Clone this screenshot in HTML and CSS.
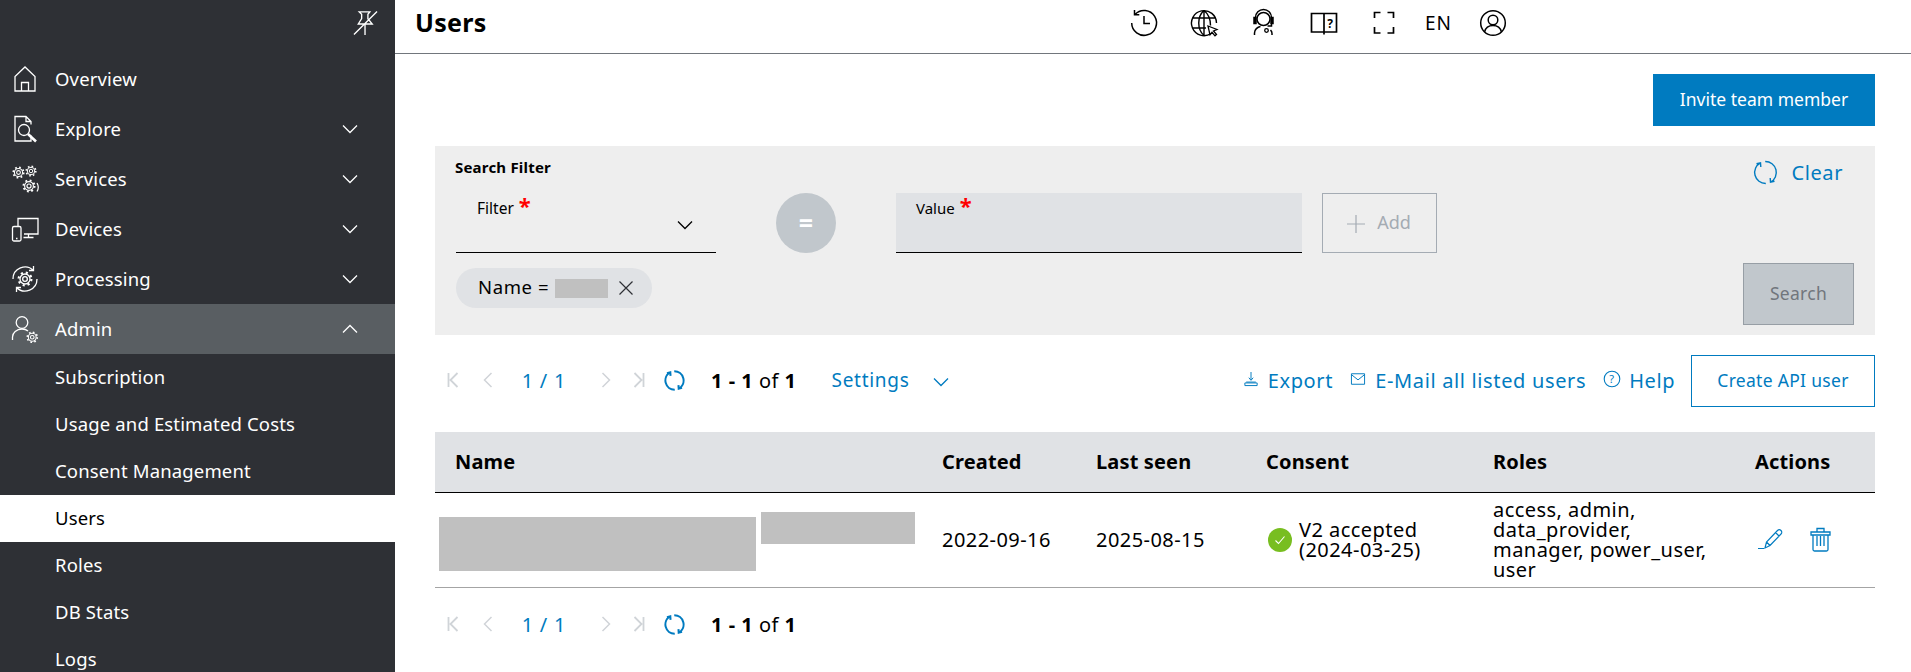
FILE: index.html
```html
<!DOCTYPE html>
<html lang="en">
<head>
<meta charset="utf-8">
<title>Users</title>
<link rel="stylesheet" href="styles.css">
</head>
<body>
<svg class="defs" width="0" height="0" aria-hidden="true">
  <defs>
    <symbol id="gear" viewBox="0 0 24 24">
      <circle cx="12" cy="12" r="7.500" fill="none" stroke="currentColor" stroke-width="2"/>
      <circle cx="12" cy="12" r="9.600" fill="none" stroke="currentColor" stroke-width="3.200" stroke-dasharray="3.200 4.340"/>
      <circle cx="12" cy="12" r="3.500" fill="none" stroke="currentColor" stroke-width="2"/>
    </symbol>
    <symbol id="chev-down" viewBox="0 0 16 10">
      <path d="M1 1.500 8 8.500l7-7" fill="none" stroke="currentColor" stroke-width="1.300"/>
    </symbol>
    <symbol id="chev-up" viewBox="0 0 16 10">
      <path d="M1 8.500 8 1.500l7 7" fill="none" stroke="currentColor" stroke-width="1.300"/>
    </symbol>
    <symbol id="refresh" viewBox="0 0 25 25">
      <path d="M7.500 2.800A11 11 0 0 0 12.800 23.500M12.200 1.500A11 11 0 0 1 17.500 22.200M3.500 3.800 7.500 2.800 7.800 7M21.500 21.200 17.500 22.200 17.200 18" fill="none" stroke="currentColor"/>
    </symbol>
    <symbol id="first" viewBox="0 0 12 16">
      <path d="M1.500 1v14M10.500 1 3.500 8l7 7" fill="none" stroke="currentColor" stroke-width="1.800"/>
    </symbol>
    <symbol id="prev" viewBox="0 0 10 16">
      <path d="M8.500 1 1.500 8l7 7" fill="none" stroke="currentColor" stroke-width="1.500"/>
    </symbol>
    <symbol id="next" viewBox="0 0 10 16">
      <path d="M1.500 1l7 7-7 7" fill="none" stroke="currentColor" stroke-width="1.500"/>
    </symbol>
    <symbol id="last" viewBox="0 0 12 16">
      <path d="M10.500 1v14M1.500 1l7 7-7 7" fill="none" stroke="currentColor" stroke-width="1.800"/>
    </symbol>
  </defs>
</svg>

<div class="app">
  <aside class="sidebar">
    <div class="pin-row">
      <svg class="pin" viewBox="0 0 26 26" aria-hidden="true"><path d="M6.500 1.500h11l-2 2.500v4.500l4.500 5.500H5.500L9 8.500V4zM12.500 14V25.500M1 25 25 1" fill="none" stroke="currentColor" stroke-width="1.400"/></svg>
    </div>
    <nav class="nav">
      <a class="nav-item">
        <span class="nav-icon"><svg viewBox="0 0 30 30"><path d="M5 27V12.500L15 3l10 9.500V27zM11.500 27V18.500h7V27" fill="none" stroke="currentColor" stroke-width="1.300"/></svg></span>
        <span class="nav-label">Overview</span>
      </a>
      <a class="nav-item">
        <span class="nav-icon"><svg viewBox="0 0 30 30"><path d="M21 21.500v5.500H5V2.500h11l5 5v3M16 2.500v5h5" fill="none" stroke="currentColor" stroke-width="1.300"/><circle cx="14" cy="16" r="5.500" fill="none" stroke="currentColor" stroke-width="1.300"/><path d="m18 20 8 7.500" fill="none" stroke="currentColor" stroke-width="2.600"/></svg></span>
        <span class="nav-label">Explore</span>
        <svg class="nav-chev"><use href="#chev-down"/></svg>
      </a>
      <a class="nav-item">
        <span class="nav-icon"><svg viewBox="0 0 30 30"><use href="#gear" x="2" y="2" width="13" height="13"/><use href="#gear" x="15" y="1" width="12" height="12"/><use href="#gear" x="12" y="15" width="14" height="14"/><path d="M27 19c1.500 2.500 1.500 6 0 8.500" fill="none" stroke="currentColor" stroke-width="1.200"/></svg></span>
        <span class="nav-label">Services</span>
        <svg class="nav-chev"><use href="#chev-down"/></svg>
      </a>
      <a class="nav-item">
        <span class="nav-icon"><svg viewBox="0 0 30 30"><path d="M8 12V4.500h20V20H14M18.500 20v3.500M13.500 23.500h10" fill="none" stroke="currentColor" stroke-width="1.300"/><rect x="2.500" y="12.500" width="8.500" height="14.500" rx="1.500" fill="none" stroke="currentColor" stroke-width="1.300"/><path d="M6 24.500h1.500" stroke="currentColor" stroke-width="1.300"/></svg></span>
        <span class="nav-label">Devices</span>
        <svg class="nav-chev"><use href="#chev-down"/></svg>
      </a>
      <a class="nav-item">
        <span class="nav-icon"><svg viewBox="0 0 30 30"><use href="#gear" x="7" y="7" width="16" height="16"/><path d="M3 15a12 12 0 0 1 20.500-8.500M27 15A12 12 0 0 1 6.500 23.500M23.500 2v4.500H19M6.500 28v-4.500H11" fill="none" stroke="currentColor" stroke-width="1.300"/></svg></span>
        <span class="nav-label">Processing</span>
        <svg class="nav-chev"><use href="#chev-down"/></svg>
      </a>
      <a class="nav-item is-open">
        <span class="nav-icon"><svg viewBox="0 0 30 30"><circle cx="12" cy="8.500" r="5.800" fill="none" stroke="currentColor" stroke-width="1.300"/><path d="M2.500 26v-3c0-4 4-8 9.500-8 2.500 0 4.500.7 6 2" fill="none" stroke="currentColor" stroke-width="1.300"/><use href="#gear" x="16" y="17" width="12.500" height="12.500"/></svg></span>
        <span class="nav-label">Admin</span>
        <svg class="nav-chev"><use href="#chev-up"/></svg>
      </a>
      <a class="nav-sub">Subscription</a>
      <a class="nav-sub">Usage and Estimated Costs</a>
      <a class="nav-sub">Consent Management</a>
      <a class="nav-sub is-active">Users</a>
      <a class="nav-sub">Roles</a>
      <a class="nav-sub">DB Stats</a>
      <a class="nav-sub">Logs</a>
    </nav>
  </aside>

  <div class="main">
    <header class="topbar">
      <h1 class="title">Users</h1>
      <div class="top-icons">
        <span class="top-icon"><svg viewBox="0 0 30 30"><path d="M6 6.500A12.400 12.400 0 1 1 2.700 15M5.500 2v4.800h4.800M15 8v7.500h6" fill="none" stroke="currentColor" stroke-width="1.500"/></svg></span>
        <span class="top-icon"><svg viewBox="0 0 30 30"><path d="M22 25.500A12.500 12.500 0 1 1 27.500 15M15 2.500c-7 6-7 19 0 25M15 2.500c5 4 6.500 10 6.500 15M15 2.500v25M3 10h24M3 20h14" fill="none" stroke="currentColor" stroke-width="1.400"/><path d="m19 18 9 3.500-3.500 1.500 3 3.500-1.500 1.300-3-3.500-2 2.500z" fill="#fff" stroke="currentColor" stroke-width="1.300"/></svg></span>
        <span class="top-icon"><svg viewBox="0 0 30 30"><circle cx="14.500" cy="11" r="6.500" fill="none" stroke="currentColor" stroke-width="1.500"/><path d="M6.500 15V9.500a8 8 0 0 1 16 0V15M5 9.500h2v6H5zM22 9.500h2v6h-2zM22.500 15v3h-4M5.500 27v-2c0-3.500 3-6 6-6.500M23 27v-1.500c0-1.500-.5-2.500-1.500-3.500" fill="none" stroke="currentColor" stroke-width="1.500"/><circle cx="17.500" cy="22.500" r="1.800" fill="none" stroke="currentColor" stroke-width="1.300"/></svg></span>
        <span class="top-icon"><svg viewBox="0 0 30 30"><path d="M2.500 5.500h25v18.500h-25zM15 5.500v21" fill="none" stroke="currentColor" stroke-width="1.700"/><text class="book-q" x="21" y="19.500" text-anchor="middle">?</text></svg></span>
        <span class="top-icon"><svg viewBox="0 0 30 30"><path d="M5.500 10V4.500h6M18.500 4.500h6V10M24.500 19v6h-6M11.500 25h-6v-6" fill="none" stroke="currentColor" stroke-width="1.700"/></svg></span>
        <span class="top-lang">EN</span>
        <span class="top-icon"><svg viewBox="0 0 30 30"><circle cx="15" cy="15" r="12.300" fill="none" stroke="currentColor" stroke-width="1.500"/><circle cx="15" cy="12" r="4.800" fill="none" stroke="currentColor" stroke-width="1.500"/><path d="M6.500 24c1-4 4.500-6.500 8.500-6.500s7.500 2.500 8.500 6.500" fill="none" stroke="currentColor" stroke-width="1.500"/></svg></span>
      </div>
    </header>

    <div class="content">
      <div class="action-row">
        <button class="btn-primary">Invite team member</button>
      </div>

      <section class="panel">
        <div class="panel-left">
          <div class="panel-title">Search Filter</div>
          <div class="filter-row">
            <div class="field field-select">
              <span class="field-label">Filter<span class="req">*</span></span>
              <svg class="field-chev"><use href="#chev-down"/></svg>
            </div>
            <div class="op">=</div>
            <div class="field field-value">
              <span class="field-label">Value<span class="req">*</span></span>
            </div>
            <button class="btn-add"><svg class="plus" viewBox="0 0 20 20"><path d="M10 1v18M1 10h18" stroke="currentColor" stroke-width="1.200"/></svg>Add</button>
          </div>
          <div class="chip">
            <span class="chip-name">Name =</span>
            <span class="chip-redact"></span>
            <svg class="chip-x" viewBox="0 0 16 16"><path d="M1.500 1.500l13 13M14.500 1.500l-13 13" stroke="currentColor" stroke-width="1.200"/></svg>
          </div>
        </div>
        <div class="panel-right">
          <a class="clear"><svg class="clear-icon"><use href="#refresh"/></svg>Clear</a>
          <button class="btn-search">Search</button>
        </div>
      </section>

      <div class="toolbar">
        <div class="pager">
          <svg class="pg pg-first"><use href="#first"/></svg>
          <svg class="pg pg-prev"><use href="#prev"/></svg>
          <span class="pg-num">1 / 1</span>
          <svg class="pg pg-next"><use href="#next"/></svg>
          <svg class="pg pg-last"><use href="#last"/></svg>
          <svg class="pg-refresh"><use href="#refresh"/></svg>
          <span class="pg-count"><b>1 - 1</b> of <b>1</b></span>
        </div>
        <a class="settings">Settings<svg class="settings-chev"><use href="#chev-down"/></svg></a>
        <div class="tools">
          <a class="tool"><svg class="tool-icon" viewBox="0 0 16 18"><path d="M8 1v9M5.500 7.500 8 10.500l2.500-3M2.500 12.500h11M1 16.500h14v-3H1z" fill="none" stroke="currentColor" stroke-width="1.100"/></svg>Export</a>
          <a class="tool"><svg class="tool-icon tool-mail" viewBox="0 0 18 16"><path d="M1.500 2h15v12h-15zM1.500 3 9 9l7.500-6" fill="none" stroke="currentColor" stroke-width="1.100"/></svg>E-Mail all listed users</a>
          <a class="tool tool-last"><svg class="tool-icon tool-help" viewBox="0 0 18 18"><circle cx="9" cy="9" r="7.800" fill="none" stroke="currentColor" stroke-width="1.100"/><text class="help-q" x="9" y="13" text-anchor="middle">?</text></svg>Help</a>
          <button class="btn-outline">Create API user</button>
        </div>
      </div>

      <div class="table">
        <div class="t-row t-head">
          <div class="cell">Name</div>
          <div class="cell">Created</div>
          <div class="cell">Last seen</div>
          <div class="cell">Consent</div>
          <div class="cell">Roles</div>
          <div class="cell">Actions</div>
        </div>
        <div class="t-row t-body">
          <div class="cell cell-name">
            <span class="redact redact-a"></span>
            <span class="redact redact-b"></span>
          </div>
          <div class="cell">2022-09-16</div>
          <div class="cell">2025-08-15</div>
          <div class="cell cell-consent">
            <svg class="ok" viewBox="0 0 24 24"><circle cx="12" cy="12" r="12" fill="#78be20"/><path d="m7.500 12.500 3 3 6-7" fill="none" stroke="#fff" stroke-width="1.100"/></svg>
            <span>V2 accepted<br>(2024-03-25)</span>
          </div>
          <div class="cell">access, admin,<br>data_provider,<br>manager, power_user,<br>user</div>
          <div class="cell cell-actions">
            <svg class="edit" viewBox="0 0 26 22"><path d="M0 20.500h6M7 20l1.500-6L19.500 2.500c1-1 2.500-1 3.500 0s1 2.500 0 3.500L12 17.500zM8.500 14l3.500 3.500M17.500 4.500 21 8" fill="none" stroke="currentColor" stroke-width="1.200"/></svg>
            <svg class="trash" viewBox="0 0 21 25"><path d="M1 5h19v3H1zM7 5V1.500h7V5M3 8v14.500c0 1 .7 1.500 1.500 1.500h12c.8 0 1.500-.5 1.500-1.500V8M7 9v10M10.500 9v10M14 9v10" fill="none" stroke="currentColor" stroke-width="1.300"/></svg>
          </div>
        </div>
      </div>

      <div class="toolbar toolbar-bottom">
        <div class="pager">
          <svg class="pg pg-first"><use href="#first"/></svg>
          <svg class="pg pg-prev"><use href="#prev"/></svg>
          <span class="pg-num">1 / 1</span>
          <svg class="pg pg-next"><use href="#next"/></svg>
          <svg class="pg pg-last"><use href="#last"/></svg>
          <svg class="pg-refresh"><use href="#refresh"/></svg>
          <span class="pg-count"><b>1 - 1</b> of <b>1</b></span>
        </div>
      </div>
    </div>
  </div>
</div>
</body>
</html>
```

FILE: styles.css
```css
* { box-sizing: border-box; }
html, body { margin: 0; height: 100%; overflow: hidden; background: #fff; }
body { font-family: "Noto Sans", sans-serif; color: #000; font-size: 19px; }
.defs { position: absolute; }
button { font-family: inherit; cursor: pointer; }
svg { display: block; }

.app { display: flex; height: 672px; overflow: hidden; }

.sidebar { width: 395px; flex: none; background: #2e3035; color: #fff; overflow: hidden; height: 672px; }
.pin-row { height: 54px; display: flex; justify-content: flex-end; padding: 10px 17px 0 0; }
.pin { width: 25px; height: 26px; }
.nav { display: flex; flex-direction: column; }
.nav-item { height: 50px; flex: none; display: flex; align-items: center; padding: 0 37px 0 10px; }
.nav-icon { width: 30px; height: 30px; margin-right: 15px; flex: none; }
.nav-icon svg { width: 30px; height: 30px; }
.nav-label { flex: 1; font-size: 18.500px; letter-spacing: .15px; padding-bottom: 1px; }
.nav-chev { width: 16px; height: 10px; flex: none; }
.nav-item.is-open { background: #595e62; }
.nav-sub { height: 47px; flex: none; display: flex; align-items: center; padding: 0 0 2px 55px; font-size: 18.500px; letter-spacing: .15px; }
.nav-sub.is-active { background: #fff; color: #000; }

.main { flex: 1; min-width: 0; display: flex; flex-direction: column; }
.topbar { height: 54px; flex: none; border-bottom: 1px solid #71767c; display: flex; align-items: center; padding: 0 403px 7px 20px; }
.title { margin: 0 0 2px; font-size: 25px; font-weight: 700; line-height: 30px; letter-spacing: .3px; }
.top-icons { margin-left: auto; display: flex; align-items: center; gap: 30px; }
.top-icon { width: 30px; height: 30px; display: block; }
.top-icon svg { width: 30px; height: 30px; }
.top-lang { font-size: 19px; letter-spacing: 1px; margin: 0 -4px; }
.book-q { font-size: 12px; font-weight: 700; font-family: "Noto Sans", sans-serif; fill: currentColor; }
.help-q { font-size: 11px; font-family: "Noto Sans", sans-serif; fill: currentColor; }

.content { padding: 0 36px 0 40px; display: flex; flex-direction: column; }
.action-row { display: flex; justify-content: flex-end; margin-top: 20px; }
.btn-primary { width: 222px; height: 52px; background: #007bc0; color: #fff; border: 0; font-size: 17.500px; padding: 0 0 2px; }

.panel { margin-top: 20px; height: 189px; background: #eeeeee; display: flex; padding-left: 20px; }
.panel-left { flex: 1; padding-top: 11px; }
.panel-title { font-size: 15px; font-weight: 700; line-height: 20px; letter-spacing: .2px; }
.filter-row { margin-top: 16px; margin-left: 1px; display: flex; align-items: flex-start; }
.field { position: relative; height: 60px; border-bottom: 1px solid #000; padding: 5px 0 0 21px; }
.field-select { width: 260px; }
.field-value { width: 406px; background: #e0e2e5; margin-right: 20px; padding-left: 20px; }
.field-label { font-size: 15px; line-height: 20px; display: block; }
.field-select .field-label { font-size: 15.500px; }
.req { color: #f00; font-size: 22px; line-height: 10px; margin-left: 5px; font-weight: 700; }
.field-chev { position: absolute; right: 22px; top: 27px; width: 18px; height: 10px; }
.op { width: 60px; height: 60px; margin: 0 60px; border-radius: 50%; background: #c1c7cc; color: #fff; font-size: 25px; font-weight: 700; display: flex; align-items: center; justify-content: center; padding-bottom: 3px; }
.btn-add { width: 115px; height: 60px; background: transparent; border: 1px solid #a4abb3; color: #a4abb3; font-size: 18px; display: flex; align-items: center; justify-content: center; gap: 11px; padding: 0 2px 2px 0; }
.plus { width: 20px; height: 20px; margin-top: 3px; color: #a4abb3; }

.chip { margin-top: 15px; margin-left: 1px; width: 196px; height: 40px; border-radius: 20px; background: #e0e2e5; display: flex; align-items: center; padding-left: 22px; }
.chip-name { font-size: 18.500px; letter-spacing: .6px; width: 77px; flex: none; margin-bottom: 3px; }
.chip-redact { width: 53px; height: 19px; background: #c0c0c0; flex: none; }
.chip-x { width: 16px; height: 16px; margin-left: 10px; color: #2e3035; }

.panel-right { width: 160px; flex: none; display: flex; flex-direction: column; align-items: flex-end; justify-content: space-between; padding: 14px 21px 10px 0; }
.clear { display: flex; align-items: center; gap: 13px; color: #007bc0; font-size: 20px; letter-spacing: .6px; line-height: 25px; margin-right: 11px; }
.clear-icon { width: 25px; height: 25px; stroke-width: 1.400; margin-left: -2px; }
.btn-search { width: 111px; height: 62px; background: #c1c7cc; border: 1px solid #979ea5; color: #71767c; font-size: 17.500px; padding: 0 0 2px; letter-spacing: .3px; }

.toolbar { margin-top: 20px; height: 52px; display: flex; align-items: center; padding-left: 12px; }
.pager { display: flex; align-items: center; margin-bottom: 2px; }
.pg { color: #d0d4d8; height: 16px; flex: none; }
.pg-first, .pg-last { width: 12px; }
.pg-prev, .pg-next { width: 10px; }
.pg-prev { margin-left: 24px; }
.pg-num { color: #007bc0; font-size: 20px; width: 102px; text-align: center; margin-right: 6px; letter-spacing: .8px; flex: none; }
.pg-last { margin-left: 22px; }
.pg-refresh { width: 21px; height: 21px; color: #007bc0; margin-left: 19px; flex: none; stroke-width: 2.400; }
.pg-count { margin-left: 26px; font-size: 20px; letter-spacing: .5px; }
.pg-count b { font-weight: 700; }
.settings { margin-left: 35px; margin-bottom: 2px; color: #007bc0; font-size: 19px; letter-spacing: .7px; display: flex; align-items: center; gap: 24px; }
.settings-chev { width: 16px; height: 10px; margin-top: 4px; }
.tools { margin-left: auto; display: flex; align-items: center; }
.tool { color: #007bc0; display: flex; align-items: center; font-size: 20px; letter-spacing: .65px; margin-right: 17px; gap: 10px; margin-bottom: 2px; }
.tool-last { margin-right: 16px; gap: 8px; letter-spacing: .55px; }
.tool-icon { width: 14px; height: 16px; margin-top: -3px; }
.tool-mail { width: 16px; height: 14px; margin-right: -1px; }
.tool-help { width: 18px; height: 18px; }
.btn-outline { width: 184px; height: 52px; background: #fff; border: 1px solid #007bc0; color: #007bc0; font-size: 17.500px; letter-spacing: .3px; padding: 0 0 2px; }

.table { margin-top: 25px; }
.t-row { display: grid; grid-template-columns: 487px 154px 170px 227px 262px 140px; }
.cell { padding-left: 20px; }
.t-head { height: 61px; background: #e0e2e5; border-bottom: 1px solid #000; align-items: center; font-weight: 700; font-size: 20px; letter-spacing: .15px; padding-bottom: 1px; }
.t-body { height: 95px; border-bottom: 1px solid #a4a4a4; align-items: center; font-size: 20px; line-height: 20px; letter-spacing: .45px; }
.cell-name { padding-left: 4px; display: flex; align-items: flex-start; gap: 5px; align-self: stretch; }
.redact { background: #c0c0c0; display: block; }
.redact-a { width: 317px; height: 54px; margin-top: 24px; }
.redact-b { width: 154px; height: 32px; margin-top: 19px; }
.cell-consent { padding-left: 22px; display: flex; align-items: center; gap: 7px; }
.ok { width: 24px; height: 24px; flex: none; }
.cell-actions { display: flex; align-items: center; gap: 26px; color: #007bc0; padding-left: 23px; margin-top: -2px; }
.edit { width: 26px; height: 22px; }
.trash { width: 21px; height: 25px; }
.toolbar-bottom { margin-top: 11px; }
```
